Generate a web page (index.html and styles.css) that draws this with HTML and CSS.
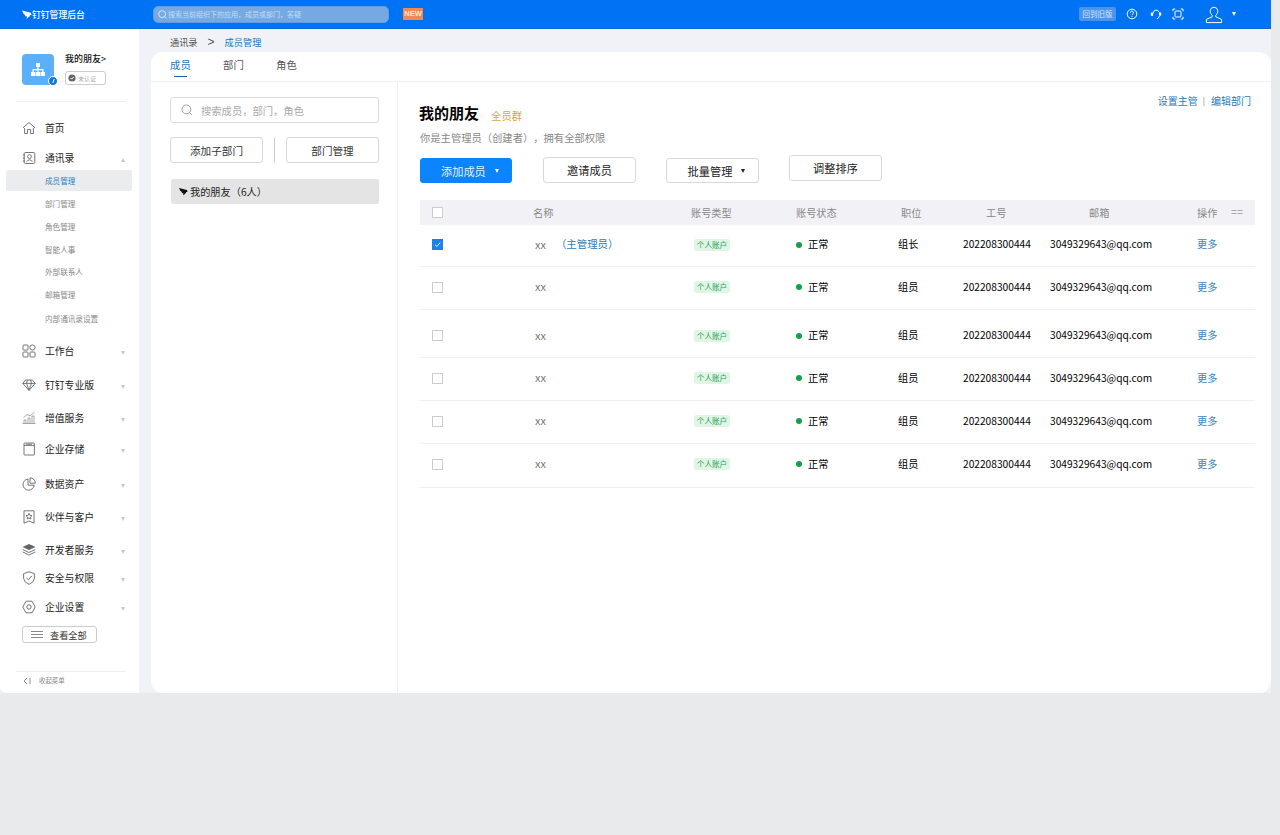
FILE: index.html
```html
<!DOCTYPE html>
<html lang="zh-CN">
<head>
<meta charset="utf-8">
<title>成员管理</title>
<link rel="stylesheet" href="styles.css">
</head>
<body>
<div class="app">
  <header class="topbar">
    <div class="brand">
      <svg class="wing" viewBox="0 0 10 9"><path d="M0 0.5 L8.8 2.8 L9.6 4.8 L7.6 5.4 L8 6 L4.6 9 L5 6.6 L3.4 6.2 L2.8 4.8 L1.4 3.6 Z"/></svg>
      <span>钉钉管理后台</span>
    </div>
    <div class="topsearch">
      <svg class="ts-icon" viewBox="0 0 10 10"><circle cx="4.6" cy="4.6" r="3.8"/><path d="M7.4 7.4 L9.2 9.4"/></svg>
      <span>搜索当前组织下的应用，成员或部门，答疑</span>
    </div>
    <span class="new">NEW</span>
    <div class="top-right">
      <span class="oldver">回到旧版</span>
      <svg class="ti ti-help" viewBox="0 0 12 12"><circle cx="6" cy="6" r="4.8"/><path d="M4.5 4.7 A1.5 1.5 0 1 1 6.6 6 Q6 6.3 6 7.2"/><path d="M6 8.2 V9"/></svg>
      <svg class="ti ti-head" viewBox="0 0 12 12"><path d="M3 5 A3.2 3.6 0 0 1 9.2 4.6"/><path d="M9.6 7.6 Q9.4 9.8 6.8 11"/><rect class="fill" x="0.8" y="4.4" width="2.4" height="3.6" rx="1"/><rect class="fill" x="9" y="4.2" width="2.2" height="3.6" rx="1"/></svg>
      <svg class="ti ti-scan" viewBox="0 0 12 12"><path d="M1 3.2 V1 H3.2 M8.8 1 H11 V3.2 M11 8.8 V11 H8.8 M3.2 11 H1 V8.8"/><rect x="3" y="3" width="6" height="6" rx="1"/></svg>
      <svg class="ti-user" viewBox="0 0 18 19"><path d="M5.2 5.6 A3.9 4.4 0 0 1 12.8 5.6 C12.8 8 11.8 9.4 10.8 10.2 V11.8 L16.6 14.4 V17.6 H1.4 V14.4 L7.2 11.8 V10.2 C6.2 9.4 5.2 8 5.2 5.6 Z"/></svg>
      <i class="caret caret-white"></i>
    </div>
  </header>

  <div class="layout">
    <aside class="sidebar">
      <div class="org">
        <div class="org-logo">
          <svg viewBox="0 0 16 16"><path d="M6 1 H10 V5 H8.6 V7 H13.5 V10 H15 V14 H10.5 V10 H12.2 V8.3 H8.6 V10 H10 V14 H6 V10 H7.4 V8.3 H3.8 V10 H5.5 V14 H1 V10 H2.5 V7 H7.4 V5 H6 Z"/></svg>
          <span class="org-dot"></span>
        </div>
        <div class="org-info">
          <div class="org-name">我的朋友&gt;</div>
          <div class="org-badge">
            <svg viewBox="0 0 8 8"><circle cx="4" cy="4" r="3.6"/><path d="M2.5 4 L3.6 5.1 L5.6 3" class="tick"/></svg>
            <span>未认证</span>
          </div>
        </div>
      </div>

      <nav class="nav">
        <a class="nav-item"><svg class="ni" viewBox="0 0 14 14"><path d="M1 6.8 L7 1.5 L13 6.8"/><path d="M2.6 7 V12.5 H5.4 V8.5 H8.6 V12.5 H11.4 V7"/></svg><span>首页</span></a>
        <a class="nav-item"><svg class="ni" viewBox="0 0 14 14"><rect x="2.2" y="1.5" width="10.6" height="11" rx="1.2"/><circle cx="7.5" cy="5.6" r="1.9"/><path d="M4.4 10.8 Q7.5 6.8 10.6 10.8 M0.8 4 H2.8 M0.8 7 H2.8 M0.8 10 H2.8"/></svg><span>通讯录</span><i class="caret caret-up"></i></a>
        <a class="sub sub-active">成员管理</a>
        <a class="sub">部门管理</a>
        <a class="sub">角色管理</a>
        <a class="sub">智能人事</a>
        <a class="sub">外部联系人</a>
        <a class="sub">邮箱管理</a>
        <a class="sub">内部通讯录设置</a>
        <a class="nav-item"><svg class="ni" viewBox="0 0 14 14"><rect x="1" y="1" width="5" height="5" rx="0.8"/><circle cx="10.5" cy="3.5" r="2.6"/><rect x="1" y="8" width="5" height="5" rx="0.8"/><rect x="8" y="8" width="5" height="5" rx="0.8"/></svg><span>工作台</span><i class="caret"></i></a>
        <a class="nav-item"><svg class="ni" viewBox="0 0 14 14"><path d="M3.5 2 H10.5 L13.2 5.4 L7 12.4 L0.8 5.4 Z M0.8 5.4 H13.2 M4.6 5.4 L7 12.4 L9.4 5.4 M5.4 2 L4.6 5.4 M8.6 2 L9.4 5.4"/></svg><span>钉钉专业版</span><i class="caret"></i></a>
        <a class="nav-item"><svg class="ni ni-thin" viewBox="0 0 14 14"><path d="M0.5 12.5 H13.5 M2 12.5 V9 H4 V12.5 M6 12.5 V7 H8 V12.5 M10 12.5 V5 H12 V12.5 M1.5 6.5 L5 3.5 L8 5 L12.5 1.2"/></svg><span>增值服务</span><i class="caret"></i></a>
        <a class="nav-item"><svg class="ni" viewBox="0 0 14 14"><rect x="2" y="1" width="10.4" height="12" rx="0.6"/><path d="M2 3.4 H12.4 M4 2.2 H10"/></svg><span>企业存储</span><i class="caret"></i></a>
        <a class="nav-item"><svg class="ni" viewBox="0 0 14 14"><path d="M6 2 A5.6 5.6 0 1 0 12.2 8.2 H6 Z"/><path d="M8 0.8 A5.6 5.6 0 0 1 13.4 6.2 H8 Z"/></svg><span>数据资产</span><i class="caret"></i></a>
        <a class="nav-item"><svg class="ni" viewBox="0 0 14 14"><path d="M2 0.8 H12 V13.2 L7 11 L2 13.2 Z"/><path d="M7 3.4 L7.9 5.3 L10 5.6 L8.5 7 L8.9 9 L7 8 L5.1 9 L5.5 7 L4 5.6 L6.1 5.3 Z"/></svg><span>伙伴与客户</span><i class="caret"></i></a>
        <a class="nav-item"><svg class="ni ni-solid" viewBox="0 0 14 14"><path class="fill" d="M7 1 L13.5 4 L7 7 L0.5 4 Z"/><path d="M0.8 6.6 L7 9.5 L13.2 6.6 M0.8 9 L7 12 L13.2 9"/></svg><span>开发者服务</span><i class="caret"></i></a>
        <a class="nav-item"><svg class="ni" viewBox="0 0 14 14"><path d="M7 0.8 L12.4 2.6 V7.2 Q12.4 11 7 13.4 Q1.6 11 1.6 7.2 V2.6 Z"/><path d="M4.4 6.8 L6.4 8.7 L9.8 5"/></svg><span>安全与权限</span><i class="caret"></i></a>
        <a class="nav-item"><svg class="ni" viewBox="0 0 14 14"><path d="M4 1.2 H10 L13.2 7 L10 12.8 H4 L0.8 7 Z"/><circle cx="7" cy="7" r="2.2"/></svg><span>企业设置</span><i class="caret"></i></a>
        <a class="viewall"><span class="bars"><i></i><i></i><i></i></span><span>查看全部</span></a>
      </nav>

      <div class="collapse">
        <svg viewBox="0 0 8 8"><path d="M4 1 L1 4 L4 7 M7 1 V7"/></svg>
        <span>收起菜单</span>
      </div>
    </aside>

    <main class="main">
      <div class="crumbs">
        <span>通讯录</span>
        <span class="crumb-sep">&gt;</span>
        <span class="crumb-now">成员管理</span>
      </div>
      <section class="card">
        <div class="tabs">
          <span class="tab tab-on">成员</span>
          <span class="tab">部门</span>
          <span class="tab">角色</span>
        </div>
        <div class="card-body">
          <div class="tree">
            <div class="search">
              <svg viewBox="0 0 12 12"><circle cx="5.4" cy="5.4" r="4.4"/><path d="M8.6 8.6 L10.8 10.8"/></svg>
              <span>搜索成员，部门，角色</span>
            </div>
            <div class="tree-actions">
              <button class="btn btn-tree">添加子部门</button>
              <span class="vr"></span>
              <button class="btn btn-tree">部门管理</button>
            </div>
            <div class="tree-node">
              <svg class="wing-dark" viewBox="0 0 10 9"><path d="M0 0.5 L8.8 2.8 L9.6 4.8 L7.6 5.4 L8 6 L4.6 9 L5 6.6 L3.4 6.2 L2.8 4.8 L1.4 3.6 Z"/></svg>
              <span>我的朋友（6人）</span>
            </div>
          </div>

          <div class="content">
            <div class="links"><a>设置主管</a><span class="link-sep">|</span><a>编辑部门</a></div>
            <div class="title-line"><h1>我的朋友</h1><span class="allgroup">全员群</span></div>
            <p class="subtitle">你是主管理员（创建者），拥有全部权限</p>
            <div class="toolbar">
              <button class="btn btn-primary"><span>添加成员</span><i class="caret caret-white"></i></button>
              <button class="btn btn-invite">邀请成员</button>
              <button class="btn btn-batch"><span>批量管理</span><i class="caret caret-black"></i></button>
              <button class="btn btn-sort">调整排序</button>
            </div>

            <div class="table">
              <div class="thead">
                <span class="check"></span>
                <span>名称</span><span>账号类型</span><span>账号状态</span><span>职位</span><span>工号</span><span>邮箱</span><span>操作</span><span class="equal">==</span>
              </div>
              <div class="row row-first">
                <span class="check check-on"><svg viewBox="0 0 10 10"><path d="M2.2 5.2 L4.3 7.2 L8 3"/></svg></span>
                <span class="name">xx<em>（主管理员）</em></span><span><b class="tag">个人账户</b></span><span class="state"><i></i>正常</span><span>组长</span><span>202208300444</span><span>3049329643@qq.com</span><a class="more">更多</a>
              </div>
              <div class="row">
                <span class="check"></span>
                <span class="name">xx</span><span><b class="tag">个人账户</b></span><span class="state"><i></i>正常</span><span>组员</span><span>202208300444</span><span>3049329643@qq.com</span><a class="more">更多</a>
              </div>
              <div class="row row-tall">
                <span class="check"></span>
                <span class="name">xx</span><span><b class="tag">个人账户</b></span><span class="state"><i></i>正常</span><span>组员</span><span>202208300444</span><span>3049329643@qq.com</span><a class="more">更多</a>
              </div>
              <div class="row">
                <span class="check"></span>
                <span class="name">xx</span><span><b class="tag">个人账户</b></span><span class="state"><i></i>正常</span><span>组员</span><span>202208300444</span><span>3049329643@qq.com</span><a class="more">更多</a>
              </div>
              <div class="row">
                <span class="check"></span>
                <span class="name">xx</span><span><b class="tag">个人账户</b></span><span class="state"><i></i>正常</span><span>组员</span><span>202208300444</span><span>3049329643@qq.com</span><a class="more">更多</a>
              </div>
              <div class="row row-last">
                <span class="check"></span>
                <span class="name">xx</span><span><b class="tag">个人账户</b></span><span class="state"><i></i>正常</span><span>组员</span><span>202208300444</span><span>3049329643@qq.com</span><a class="more">更多</a>
              </div>
            </div>
          </div>
        </div>
      </section>
    </main>
  </div>
</div>
</body>
</html>
```

FILE: styles.css
```css
* { box-sizing: border-box; }
html, body { margin: 0; padding: 0; }
body {
  width: 1280px;
  height: 835px;
  overflow: hidden;
  background: #e9eaec;
  font-family: "Noto Sans CJK SC", "Noto Sans", sans-serif;
  color: #000;
}
a { text-decoration: none; color: inherit; }
svg { display: block; flex: none; fill: none; stroke: currentColor; }
i { font-style: normal; }

.app { width: 1271px; height: 693px; display: flex; flex-direction: column; }

/* top bar */
.topbar {
  height: 29px;
  flex: none;
  background: #0073f5;
  border-bottom: 1px solid #0a68d8;
  display: flex;
  align-items: center;
  color: #fff;
}
.brand { display: flex; align-items: center; margin-left: 22px; width: 131px; font-size: 8.8px; font-weight: 500; }
.wing { width: 10px; height: 9px; fill: #fff; stroke: none; }
.topsearch {
  width: 236px;
  height: 17px;
  border-radius: 5px;
  background: #76a9e2;
  border: 1px solid #5f9ee6;
  display: flex;
  align-items: center;
  padding-left: 4px;
  font-size: 7px;
  color: #c6dcf4;
}
.ts-icon { width: 9px; height: 9px; color: #e0ecfa; margin-right: 1px; }
.new {
  margin-left: 14px;
  width: 20px;
  height: 12px;
  background: #ee8a52;
  color: #fbe6c8;
  font: 700 7.5px/12px "Liberation Sans", sans-serif;
  text-align: center;
}
.top-right { margin-left: auto; display: flex; align-items: center; }
.oldver {
  width: 37px;
  height: 14px;
  border-radius: 2px;
  background: #4c93ea;
  color: #d6e7fb;
  font-size: 7.5px;
  line-height: 14px;
  text-align: center;
}
.ti { width: 12px; height: 12px; stroke-width: 1; }
.ti .fill { fill: #fff; stroke: none; }
.ti-help { margin-left: 10px; }
.ti-head { margin-left: 12px; }
.ti-scan { margin-left: 10px; }
.ti-user { width: 18px; height: 19px; margin-left: 21px; stroke-width: 1; }
.top-right .caret { margin: 0 35px 0 9px; }

/* carets */
.caret {
  display: block;
  width: 0;
  height: 0;
  border-left: 2.5px solid transparent;
  border-right: 2.5px solid transparent;
  border-top: 4px solid #c8c8c8;
}
.caret-white { border-top-color: #fff; }
.caret-black { border-top-color: #222; }
.caret-up { border-top: 0; border-bottom: 4px solid #c8c8c8; }

/* layout */
.layout { flex: 1; display: flex; min-height: 0; background: #f1f2f7; }
.sidebar {
  width: 139px;
  flex: none;
  background: #fff;
  border-bottom-left-radius: 7px;
  display: flex;
  flex-direction: column;
  padding-top: 25px;
}
.org {
  margin: 0 13px 0 16px;
  padding: 0 0 16px 6px;
  height: 48px;
  border-bottom: 1px solid #eeeff1;
  display: flex;
  align-items: flex-start;
}
.org-logo {
  position: relative;
  width: 32px;
  height: 31px;
  border-radius: 4px;
  background: #5ab0fa;
  color: #fff;
  display: flex;
  align-items: center;
  justify-content: center;
}
.org-logo svg { width: 16px; height: 16px; fill: #fff; stroke: none; }
.org-dot {
  position: absolute;
  right: -4px;
  bottom: -1px;
  width: 10px;
  height: 10px;
  border-radius: 50%;
  background: #1177d8;
  border: 1px solid #fff;
  display: flex;
  align-items: center;
  justify-content: center;
}
.org-dot::after {
  content: "";
  width: 1px;
  height: 4px;
  background: #fff;
  transform: rotate(20deg);
}
.org-info { margin-left: 11px; }
.org-name { font-size: 9px; line-height: 10px; font-weight: 500; margin-bottom: 7px; color: #111; }
.org-badge {
  width: 41px;
  height: 14px;
  border: 1px solid #ccc;
  border-radius: 3px;
  display: flex;
  align-items: center;
  padding-left: 2px;
  font-size: 6px;
  color: #aaa;
}
.org-badge svg { width: 8px; height: 8px; fill: #666; stroke: none; margin-right: 2px; }
.org-badge .tick { fill: none; stroke: #fff; stroke-width: 1; }

.nav {
  margin-top: 17px;
  display: grid;
  grid-template-rows: 30px 21px 23px 23px 23px 22px 23px 24px 34px 34px 33px 31px 35px 33px 33px 28px 29px 28px auto;
  align-items: start;
}
.nav-item {
  display: flex;
  align-items: center;
  height: 18px;
  padding: 0 14px 0 22px;
  font-size: 9.8px;
  color: #222;
}
.ni { width: 14px; height: 14px; stroke-width: 0.9; color: #666; margin-right: 9px; }
.ni-thin { color: #888; stroke-width: 0.7; }
.ni .fill { fill: #666; stroke: none; }
.nav-item .caret { margin-left: auto; margin-top: 3px; }
.sub {
  height: 21px;
  line-height: 21px;
  padding-left: 39px;
  margin: 0 7px 0 6px;
  font-size: 7.6px;
  color: #888;
}
.sub-active { background: #ebecee; color: #2a7fc8; border-radius: 2px; }
.viewall {
  margin-left: 22px;
  width: 75px;
  height: 17px;
  border: 1px solid #ccc;
  border-radius: 3px;
  display: flex;
  align-items: center;
  padding-left: 8px;
  font-size: 9.2px;
  color: #333;
}
.bars { display: flex; flex-direction: column; gap: 2px; width: 12px; margin-right: 7px; }
.bars i { display: block; height: 1px; background: #888; }
.collapse {
  margin: auto 13px 0 16px;
  height: 22px;
  padding: 0 0 4px 7px;
  border-top: 1px solid #eeeff1;
  display: flex;
  align-items: center;
  font-size: 6.4px;
  color: #888;
}
.collapse svg { width: 8px; height: 8px; stroke-width: 0.7; margin-right: 8px; color: #666; }

/* main */
.main { flex: 1; min-width: 0; display: flex; flex-direction: column; padding-left: 12px; }
.crumbs {
  height: 23px;
  flex: none;
  padding: 3px 0 0 19px;
  display: flex;
  align-items: center;
  font-size: 9.2px;
  color: #555;
}
.crumb-sep { margin: 0 10px 0 10px; font-size: 12px; color: #555; font-family: "Liberation Sans", sans-serif; }
.crumb-now { color: #1a78c2; }
.card {
  flex: 1;
  background: #fff;
  border-radius: 12px;
  display: flex;
  flex-direction: column;
  min-height: 0;
}
.tabs {
  height: 30px;
  flex: none;
  border-bottom: 1px solid #eeeff1;
  display: flex;
  padding-left: 19px;
  gap: 32px;
  font-size: 10.4px;
  color: #555;
}
.tab { position: relative; height: 29px; line-height: 25px; width: 21px; white-space: nowrap; }
.tab-on { color: #1a78c2; }
.tab-on::after {
  content: "";
  position: absolute;
  left: 4px;
  right: 4px;
  bottom: 4px;
  height: 1.5px;
  background: #0f5fa8;
}
.card-body { flex: 1; display: flex; min-height: 0; }
.tree { width: 247px; flex: none; border-right: 1px solid #eeeff1; padding: 15px 18px 0 19px; }
.search {
  height: 26px;
  border: 1px solid #dcdcdc;
  border-radius: 3px;
  display: flex;
  align-items: center;
  padding-left: 10px;
  font-size: 10.3px;
  color: #aaa;
}
.search svg { width: 12px; height: 12px; color: #888; stroke-width: 0.8; margin-right: 8px; }
.tree-actions { margin-top: 14px; display: flex; justify-content: space-between; align-items: center; }
.btn {
  font-family: inherit;
  background: #fff;
  border: 1px solid #d8d8d8;
  border-radius: 3px;
  padding: 0;
  color: #222;
  font-size: 10.6px;
  height: 26px;
  width: 93px;
  display: flex;
  align-items: center;
  justify-content: center;
}
.btn-tree { height: 26px; color: #333; }
.vr { width: 1px; height: 25px; background: #ccc; }
.tree-node {
  margin: 16px 0 0 1px;
  height: 25px;
  background: #e4e4e4;
  border-radius: 2px;
  display: flex;
  align-items: center;
  padding-left: 8px;
  font-size: 10.2px;
  color: #222;
  text-spacing-trim: space-all;
}
.wing-dark { width: 9px; height: 9px; fill: #111; stroke: none; margin-right: 2px; }

.content { flex: 1; min-width: 0; position: relative; padding: 18px 16px 0 21px; }
.links {
  position: absolute;
  top: 11px;
  right: 20px;
  display: flex;
  align-items: center;
  font-size: 10px;
  color: #2a7ab8;
}
.link-sep { margin: 0 6px 0 5px; font-size: 8px; color: #777; }
.title-line { display: flex; align-items: center; height: 26px; }
h1 { margin: 0; font-size: 15px; font-weight: 700; line-height: 26px; }
.allgroup { margin-left: 12px; margin-top: 4px; font-size: 10.4px; color: #e2a33f; }
.subtitle { margin: 2px 0 0 1px; font-size: 10.3px; line-height: 20px; color: #888; text-spacing-trim: space-all; }
.toolbar { margin: 10px 0 0 1px; display: flex; align-items: flex-start; height: 42px; }
.toolbar .btn { font-size: 11.2px; }
.btn-primary {
  width: 92px;
  height: 25px;
  background: #0a84ff;
  border-color: #0a84ff;
  color: #e6f2ff;
  justify-content: flex-start;
  padding-left: 20px;
}
.btn-primary .caret { margin-left: 9px; }
.btn-invite { margin-left: 31px; margin-top: -1px; }
.btn-batch { margin-left: 30px; height: 25px; }
.btn-batch .caret { margin-left: 9px; }
.btn-batch span { margin-left: 8px; }
.btn-sort { margin-left: 30px; margin-top: -3px; }

/* table */
.table { margin-left: 1px; width: 835px; }
.thead, .row { display: grid; align-items: center; padding-left: 12px; }
.thead {
  height: 25px;
  background: #f2f2f6;
  grid-template-columns: 101px 158px 105px 105px 85px 103px 108px 34px 1fr;
  font-size: 10.2px;
  color: #888;
}
.row {
  height: 43px;
  border-bottom: 1px solid #f0f0f2;
  grid-template-columns: 103px 159px 102px 102px 65px 87px 147px 1fr;
  font-size: 10.2px;
  color: #000;
  padding-bottom: 4px;
}
.row-first { height: 42px; }
.row-tall { height: 48px; padding-bottom: 0; padding-top: 2px; }
.row-last { height: 44px; padding-bottom: 5px; }
.row .check, .row .tag, .state i { margin-top: 2px; }
.equal { color: #aaa; font-family: "Liberation Sans", sans-serif; }
.check {
  width: 11px;
  height: 11px;
  border: 1px solid #ccc;
  background: #fff;
  display: block;
}
.check-on { background: #1a82ea; border-color: #1a82ea; }
.check-on svg { width: 9px; height: 9px; color: #fff; stroke-width: 1; }
.name { color: #777; font-size: 11px; display: flex; }
.name em { font-style: normal; color: #2a7ab8; margin-left: 10px; font-size: 10.4px; }
.tag {
  display: block;
  width: 36px;
  height: 12px;
  border-radius: 3px;
  background: #dff5e5;
  color: #2ca257;
  font-size: 7.6px;
  font-weight: 400;
  line-height: 12px;
  text-align: center;
}
.state { display: flex; align-items: center; }
.state i { width: 6px; height: 6px; border-radius: 50%; background: #12a14a; margin-right: 6px; }
.more { color: #3c86c4; }
```
